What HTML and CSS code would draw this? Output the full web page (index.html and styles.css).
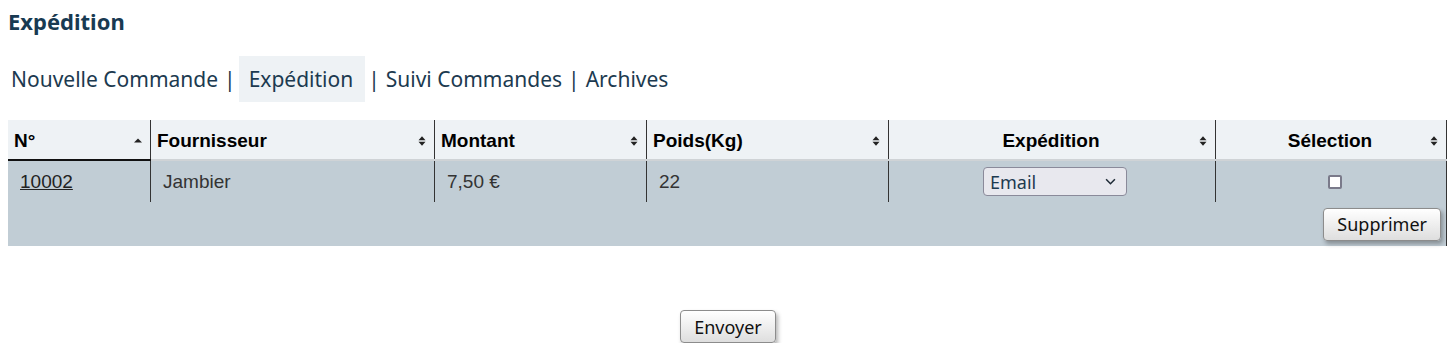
FILE: index.html
```html
<!DOCTYPE html>
<html lang="fr">
<head>
<meta charset="utf-8">
<title>Expédition</title>
<link rel="stylesheet" href="styles.css">
</head>
<body>
<h1 class="title">Expédition</h1>
<nav class="nav">
  <a class="nav-link" href="#">Nouvelle Commande</a>
  <span class="sep">|</span>
  <a class="nav-link active" href="#">Expédition</a>
  <span class="sep">|</span>
  <a class="nav-link" href="#">Suivi Commandes</a>
  <span class="sep">|</span>
  <a class="nav-link" href="#">Archives</a>
</nav>

<table class="grid">
  <colgroup>
    <col class="c1"><col class="c2"><col class="c3"><col class="c4"><col class="c5"><col class="c6">
  </colgroup>
  <thead>
    <tr>
      <th class="sorted"><div class="th-in"><span>N°</span>
        <svg class="sort" viewBox="0 0 8 12" width="8" height="12"><path d="M0 7.5 L4 3.5 L8 7.5 Z" fill="#222"/></svg></div></th>
      <th><div class="th-in"><span>Fournisseur</span>
        <svg class="sort" viewBox="0 0 8 12" width="8" height="12"><path d="M0.5 5.3 L4 1.3 L7.5 5.3 Z M0.5 6.7 L4 10.7 L7.5 6.7 Z" fill="#222"/></svg></div></th>
      <th><div class="th-in"><span>Montant</span>
        <svg class="sort" viewBox="0 0 8 12" width="8" height="12"><path d="M0.5 5.3 L4 1.3 L7.5 5.3 Z M0.5 6.7 L4 10.7 L7.5 6.7 Z" fill="#222"/></svg></div></th>
      <th><div class="th-in"><span>Poids(Kg)</span>
        <svg class="sort" viewBox="0 0 8 12" width="8" height="12"><path d="M0.5 5.3 L4 1.3 L7.5 5.3 Z M0.5 6.7 L4 10.7 L7.5 6.7 Z" fill="#222"/></svg></div></th>
      <th><div class="th-in center"><span class="lbl">Expédition</span>
        <svg class="sort" viewBox="0 0 8 12" width="8" height="12"><path d="M0.5 5.3 L4 1.3 L7.5 5.3 Z M0.5 6.7 L4 10.7 L7.5 6.7 Z" fill="#222"/></svg></div></th>
      <th><div class="th-in center"><span class="lbl">Sélection</span>
        <svg class="sort" viewBox="0 0 8 12" width="8" height="12"><path d="M0.5 5.3 L4 1.3 L7.5 5.3 Z M0.5 6.7 L4 10.7 L7.5 6.7 Z" fill="#222"/></svg></div></th>
    </tr>
  </thead>
  <tbody>
    <tr class="row">
      <td><a class="num" href="#">10002</a></td>
      <td>Jambier</td>
      <td>7,50 €</td>
      <td>22</td>
      <td class="mid">
        <div class="select"><span>Email</span>
          <svg viewBox="0 0 10 6" width="11" height="7"><path d="M1 1 L5 5 L9 1" fill="none" stroke="#1e2a36" stroke-width="1.4"/></svg>
        </div>
      </td>
      <td class="mid"><span class="check"></span></td>
    </tr>
    <tr class="actions">
      <td colspan="6"><div class="actions-in"><button class="btn" type="button">Supprimer</button></div></td>
    </tr>
  </tbody>
</table>

<div class="submit">
  <button class="btn" type="button">Envoyer</button>
</div>
</body>
</html>
```

FILE: styles.css
```css
body {
  margin: 8px;
  background: #ffffff;
  font-family: "Noto Sans", "Open Sans", sans-serif;
}

.title {
  margin: 0;
  font-size: 22px;
  line-height: 26px;
  font-weight: 700;
  color: #183a52;
}

.nav {
  margin-top: 22px;
  display: flex;
  align-items: center;
  font-size: 21px;
  line-height: 26px;
  color: #1c3a50;
}

.nav-link {
  color: #1c3a50;
  text-decoration: none;
  padding: 10px 3px;
}

.nav-link.active {
  background: #eef2f5;
  padding: 10px 12px 10px 10px;
}

.sep {
  padding: 0 3px;
}

.grid {
  margin-top: 18px;
  margin-left: -1px;
  width: 1440px;
  table-layout: fixed;
  border-collapse: collapse;
  border-left: 1px solid #333;
  border-right: 1px solid #333;
  font-family: "Liberation Sans", Arial, sans-serif;
}

.c1 { width: 143px; }
.c2 { width: 284px; }
.c3 { width: 212px; }
.c4 { width: 242px; }
.c5 { width: 327px; }
.c6 { width: 231px; }

.grid th {
  background: #eef2f5;
  height: 40px;
  box-sizing: border-box;
  padding: 2px 8px 0 6px;
  font-size: 19px;
  font-weight: 700;
  color: #000;
  text-align: left;
  border-left: 1px solid #333;
  border-bottom: 2px solid #cfd3d6;
}

.grid th.sorted {
  border-bottom-color: #111;
}

.th-in {
  display: grid;
  grid-template-columns: 1fr auto;
  align-items: center;
}

.th-in.center {
  grid-template-columns: 1fr auto 1fr;
}

.th-in.center .lbl {
  grid-column: 2;
}

.th-in.center .sort {
  grid-column: 3;
  justify-self: end;
}

.sort {
  display: block;
}

.row td {
  background: #c1cdd5;
  height: 42px;
  box-sizing: border-box;
  padding: 0 12px;
  font-size: 19px;
  color: #333;
  border-left: 1px solid #333;
}

.row td.mid {
  text-align: center;
}

.num {
  color: #222;
  text-decoration: underline;
}

.select {
  display: inline-flex;
  align-items: center;
  justify-content: space-between;
  box-sizing: border-box;
  width: 144px;
  height: 29px;
  padding: 0 10px 0 6px;
  background: #e8e8ee;
  border: 1px solid #8a8a9a;
  border-radius: 4px;
  font-family: "Noto Sans", "Open Sans", sans-serif;
  font-size: 18px;
  color: #1c3a50;
  vertical-align: middle;
  margin-left: 6px;
}

.check {
  display: inline-block;
  box-sizing: border-box;
  width: 14px;
  height: 14px;
  background: #fff;
  border: 2px solid #7a7a8a;
  border-radius: 2px;
  vertical-align: middle;
  margin-left: 8px;
}

.actions td {
  background: #c1cdd5;
  height: 44px;
  box-sizing: border-box;
  padding: 0 5px 0 0;
}

.actions-in {
  display: flex;
  justify-content: flex-end;
  align-items: center;
}

.btn {
  box-sizing: border-box;
  height: 33px;
  padding: 0 13px;
  font-family: "Noto Sans", "Open Sans", sans-serif;
  font-size: 18px;
  color: #111;
  background: linear-gradient(#ffffff, #dedede);
  border: 1px solid #8c8c8c;
  border-radius: 4px;
  box-shadow: 2px 3px 4px rgba(0, 0, 0, 0.3);
}

.submit {
  margin-top: 64px;
  display: flex;
  justify-content: center;
}
```
